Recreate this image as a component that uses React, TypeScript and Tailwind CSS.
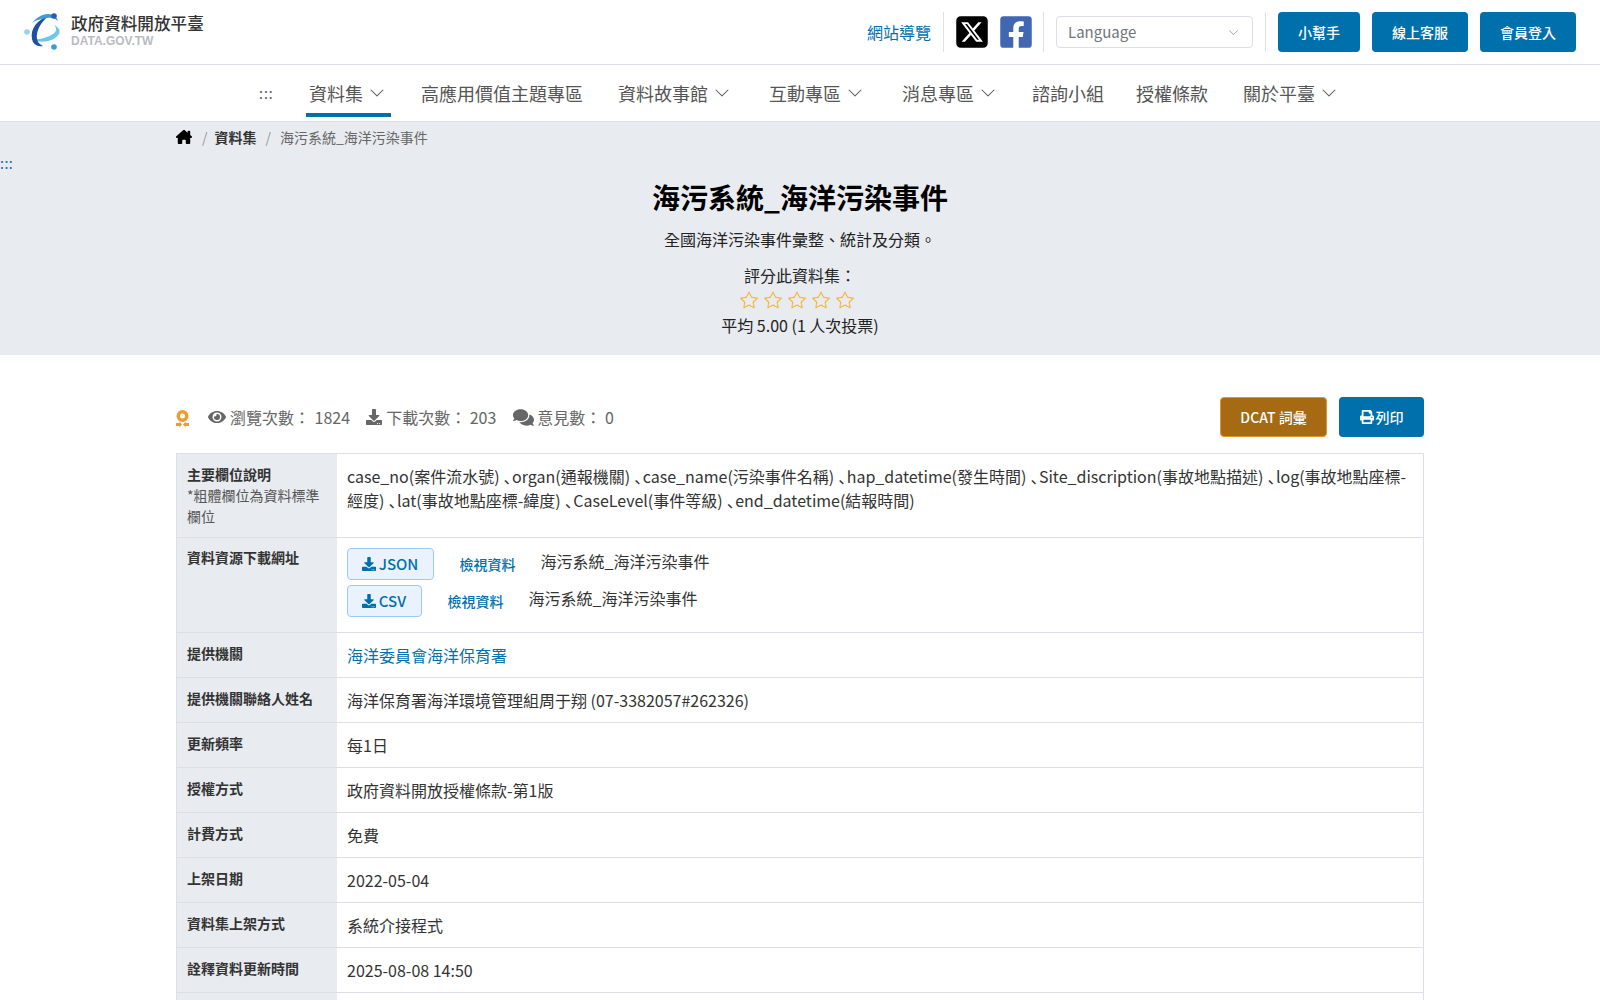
import { FaComments, FaDownload, FaEye, FaFacebookSquare, FaPrint } from 'react-icons/fa';
import { FaHouseChimney, FaSquareXTwitter } from 'react-icons/fa6';
import { BsChevronDown, BsStar } from 'react-icons/bs';

const navItems = [
  { label: '資料集', caret: true, active: true, cls: 'ml-[309px]' },
  { label: '高應用價值主題專區', caret: false, active: false, cls: 'ml-[36px]' },
  { label: '資料故事館', caret: true, active: false, cls: 'ml-[35px]' },
  { label: '互動專區', caret: true, active: false, cls: 'ml-[39px]' },
  { label: '消息專區', caret: true, active: false, cls: 'ml-[39px]' },
  { label: '諮詢小組', caret: false, active: false, cls: 'ml-[36px]' },
  { label: '授權條款', caret: false, active: false, cls: 'ml-[32px]' },
  { label: '關於平臺', caret: true, active: false, cls: 'ml-[35px]' },
];

const fieldsLine1 = [
  'case_no(案件流水號)',
  'organ(通報機關)',
  'case_name(污染事件名稱)',
  'hap_datetime(發生時間)',
  'Site_discription(事故地點描述)',
  'log(事故地點座標-',
];

const fieldsLine2 = [
  '經度)',
  'lat(事故地點座標-緯度)',
  'CaseLevel(事件等級)',
  'end_datetime(結報時間)',
];

const rows = [
  { head: '提供機關', value: '海洋委員會海洋保育署', link: true },
  { head: '提供機關聯絡人姓名', value: '海洋保育署海洋環境管理組周于翔 (07-3382057#262326)' },
  { head: '更新頻率', value: '每1日' },
  { head: '授權方式', value: '政府資料開放授權條款-第1版' },
  { head: '計費方式', value: '免費' },
  { head: '上架日期', value: '2022-05-04' },
  { head: '資料集上架方式', value: '系統介接程式' },
  { head: '詮釋資料更新時間', value: '2025-08-08 14:50' },
];

function Logo() {
  return (
    <svg width="42" height="38" viewBox="0 0 42 38" className="shrink-0">
      <path d="M7 26C16 31 30 29 35 21 37 17 34 14 30 12 33 15 33 18 29 21 23 25 15 27 7 26z" fill="#6cc8ea" />
      <path d="M24 3C13 7 6 16 8 26c1 5 5 8 11 7-5-2-7-7-6-12 1-7 6-13 11-18z" fill="#1d4fa3" />
      <path d="M8 10c4-5 10-9 16-9 5 0 9 3 10 7-3-3-7-4-11-3-6 1-11 2-15 5z" fill="#3d9bd8" />
      <circle cx="30" cy="3" r="2.8" fill="#2a5db0" />
      <circle cx="3" cy="19" r="2.8" fill="#8fd4f0" />
      <circle cx="30" cy="34" r="2.8" fill="#3d9bd8" />
    </svg>
  );
}

function Medal() {
  return (
    <svg width="13" height="18" viewBox="0 0 13 18" fill="#eb9e2f" className="shrink-0 mt-[3px]">
      <path fillRule="evenodd" d="M6.500 0a6 6 0 1 1 0 12 6 6 0 0 1 0-12zm0 3.500a2.500 2.500 0 1 0 0 5 2.500 2.500 0 0 0 0-5z" />
      <path d="M0 13h3.500v-1.500L6 14.500l-2.500 3V16H0zM13 13H9.500v-1.500L7 14.500l2.500 3V16H13z" />
    </svg>
  );
}

function Divider() {
  return <div className="w-px h-10 bg-[#dee0e6]" />;
}

function ActionButton({ label, cls }: { label: string; cls: string }) {
  return (
    <button className={`h-10 rounded bg-[#0070ad] text-white text-sm font-medium ${cls}`}>{label}</button>
  );
}

function FieldLine({ names }: { names: string[] }) {
  return (
    <div className="whitespace-nowrap">
      {names.map((name, i) => (
        <span key={name}>
          {i > 0 && <span className="pl-[4.5px]">､</span>}
          {name}
        </span>
      ))}
    </div>
  );
}

function ResourceLine({ format, cls }: { format: string; cls: string }) {
  return (
    <div className="flex items-start h-[33px]">
      <button className={`h-[32px] flex items-center justify-center gap-[3px] rounded border border-[#9ccbf2] bg-[#eaf3fd] text-[#0070ad] font-medium text-[15px] ${cls}`}>
        <FaDownload className="text-[14px]" />
        {format}
      </button>
      <a className="ml-[26px] text-sm font-medium text-[#0070ad] mt-[6px]">檢視資料</a>
      <span className="ml-[25px] mt-[1px] text-[#333]">海污系統_海洋污染事件</span>
    </div>
  );
}

export default function App() {
  return (
    <div className="h-[1000px] overflow-hidden bg-white text-[#333] font-['Noto_Sans_CJK_TC','Noto_Sans',sans-serif]">
      {/* top bar */}
      <header className="h-[65px] border-b border-[#dcdfe8] flex items-center">
        <div className="ml-[24px] flex items-center gap-[5px]">
          <Logo />
          <div className="leading-none mb-[4px]">
            <div className="text-[16.6px] font-medium text-[#333] leading-[20px]">政府資料開放平臺</div>
            <div className="mt-[2px] font-['Liberation_Sans',sans-serif] font-bold text-[12px] text-[#b9bcc0] leading-[13px]">DATA.GOV.TW</div>
          </div>
        </div>
        <div className="ml-auto mr-[24px] flex items-center">
          <a className="text-[#0070ad] mr-[12px]">網站導覽</a>
          <Divider />
          <FaSquareXTwitter className="ml-[10px] text-[36px] text-black" />
          <FaFacebookSquare className="ml-[8px] text-[36px] text-[#4267b2]" />
          <div className="ml-[9px]"><Divider /></div>
          <div className="ml-[12px] w-[197px] h-8 rounded border border-[#dcdfe8] flex items-center justify-between pl-[11px] pr-[13px] text-[15px] text-[#70757a]">
            Language
            <BsChevronDown className="text-[11px] text-[#9a9ea6]" />
          </div>
          <div className="ml-[12px]"><Divider /></div>
          <ActionButton label="小幫手" cls="ml-[12px] w-[82px]" />
          <ActionButton label="線上客服" cls="ml-[12px] w-[96px]" />
          <ActionButton label="會員登入" cls="ml-[12px] w-[96px]" />
        </div>
      </header>

      {/* main nav */}
      <nav className="relative h-[57px] border-b border-[#dcdfe8] flex items-center text-[18px] text-[#555]">
        <span className="absolute left-[259px] top-[18px] text-sm tracking-[1px] text-[#555]">:::</span>
        {navItems.map(item => (
          <div key={item.label} className={`relative flex items-center h-full ${item.cls}`}>
            {item.label}
            {item.caret && <BsChevronDown className="ml-[6px] text-[16px]" />}
            {item.active && <div className="absolute left-[-3px] right-[-6px] bottom-[4px] h-[4px] bg-[#0070ad]" />}
          </div>
        ))}
      </nav>

      {/* hero */}
      <section className="relative h-[233px] bg-[#e8ebf0] text-center">
        <div className="mx-[176px] h-[30px] flex items-center text-sm text-left">
          <FaHouseChimney className="text-black text-[16px]" />
          <span className="ml-[10px] mr-[7px] text-[#999]">/</span>
          <span className="font-bold text-[#333]">資料集</span>
          <span className="mx-[9px] text-[#999]">/</span>
          <span className="text-[#666]">海污系統_海洋污染事件</span>
        </div>
        <a className="absolute left-0 top-[31px] text-sm leading-5 tracking-[0.5px] text-[#0070ad]">:::</a>
        <h1 className="mt-[23px] text-[28px] font-bold leading-[44px] text-black">海污系統_海洋污染事件</h1>
        <p className="mt-[8px] leading-6 text-[#222]">全國海洋污染事件彙整、統計及分類。</p>
        <p className="mt-[12px] leading-6 text-[#222]">評分此資料集：</p>
        <div className="flex justify-center gap-[6px] pr-[6px] mt-[1px] h-[24px] items-center text-[18px] text-[#f5b83d]">
          <BsStar /><BsStar /><BsStar /><BsStar /><BsStar />
        </div>
        <p className="mt-[1px] leading-6 text-[#222]">平均 5.00 (1 人次投票)</p>
      </section>

      <main className="mx-[176px] mt-[42px]">
        {/* stats */}
        <div className="h-[40px] flex items-center text-[#666]">
          <Medal />
          <FaEye className="ml-[19px] text-[18px] mr-[4px]" />
          瀏覽次數：&nbsp;<span className="ml-[1px]">1824</span>
          <FaDownload className="ml-[16px] text-[16px] mr-[4px]" />
          下載次數：&nbsp;203
          <FaComments className="ml-[17px] text-[21px] mr-[3px]" />
          意見數：&nbsp;0
          <button className="ml-auto w-[107px] h-10 rounded bg-[#a56a12] border border-[#e0962c] text-white text-sm font-medium">DCAT 詞彙</button>
          <button className="ml-[12px] w-[85px] h-10 rounded bg-[#0070ad] text-white text-sm font-medium flex items-center justify-center gap-[2px]">
            <FaPrint />列印
          </button>
        </div>

        {/* detail table */}
        <table className="mt-[16px] w-full table-fixed border-collapse border border-[#dcdfe8]">
          <tbody>
            <tr className="h-[84px] border-b border-[#dcdfe8]">
              <th className="w-[160px] bg-[#e8ebf0] align-top text-left font-normal px-[10px] pt-[10px] text-sm leading-[21px]">
                <span className="font-bold">主要欄位說明</span><br />
                <span className="text-[#555]">*粗體欄位為資料標準欄位</span>
              </th>
              <td className="align-top pl-[10.5px] pr-[10px] pt-[10px] leading-6">
                <FieldLine names={fieldsLine1} />
                <FieldLine names={fieldsLine2} />
              </td>
            </tr>
            <tr className="h-[95px] border-b border-[#dcdfe8]">
              <th className="bg-[#e8ebf0] align-top text-left font-bold px-[10px] pt-[9px] text-sm leading-[21px]">資料資源下載網址</th>
              <td className="align-top px-[10px] pt-[10px]">
                <div className="flex flex-col gap-[4px]">
                  <ResourceLine format="JSON" cls="w-[87px]" />
                  <ResourceLine format="CSV" cls="w-[75px]" />
                </div>
              </td>
            </tr>
            {rows.map(row => (
              <tr key={row.head} className="h-[45px] border-b border-[#dcdfe8]">
                <th className="bg-[#e8ebf0] text-left font-bold px-[10px] text-sm align-top pt-[10px] leading-[21px]">{row.head}</th>
                <td className={`pl-[10.5px] pr-[10px] align-top pt-[10px] leading-6 ${row.link ? 'text-[#0070ad]' : ''}`}>{row.value}</td>
              </tr>
            ))}
            <tr className="h-[45px]">
              <th className="bg-[#e8ebf0]" />
              <td />
            </tr>
          </tbody>
        </table>
      </main>
    </div>
  );
}
